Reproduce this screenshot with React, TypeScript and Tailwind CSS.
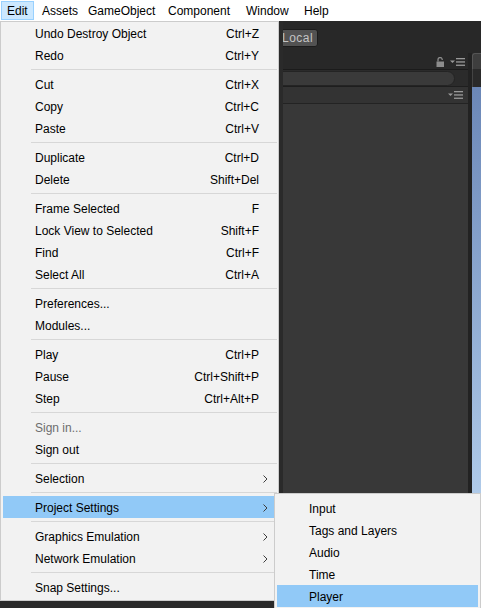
import React from "react";

type Item =
  | { kind: "sep" }
  | { kind: "item"; label: string; shortcut?: string; sub?: boolean; disabled?: boolean; active?: boolean };

const it = (label: string, shortcut?: string, extra: Partial<Item> = {}): Item =>
  ({ kind: "item", label, shortcut, ...extra } as Item);
const SEP: Item = { kind: "sep" };

const EDIT_MENU: Item[] = [
  it("Undo Destroy Object", "Ctrl+Z"),
  it("Redo", "Ctrl+Y"),
  SEP,
  it("Cut", "Ctrl+X"),
  it("Copy", "Ctrl+C"),
  it("Paste", "Ctrl+V"),
  SEP,
  it("Duplicate", "Ctrl+D"),
  it("Delete", "Shift+Del"),
  SEP,
  it("Frame Selected", "F"),
  it("Lock View to Selected", "Shift+F"),
  it("Find", "Ctrl+F"),
  it("Select All", "Ctrl+A"),
  SEP,
  it("Preferences..."),
  it("Modules..."),
  SEP,
  it("Play", "Ctrl+P"),
  it("Pause", "Ctrl+Shift+P"),
  it("Step", "Ctrl+Alt+P"),
  SEP,
  it("Sign in...", undefined, { disabled: true }),
  it("Sign out"),
  SEP,
  it("Selection", undefined, { sub: true }),
  SEP,
  it("Project Settings", undefined, { sub: true, active: true }),
  SEP,
  it("Graphics Emulation", undefined, { sub: true }),
  it("Network Emulation", undefined, { sub: true }),
  SEP,
  it("Snap Settings..."),
];

const PROJECT_SETTINGS = ["Input", "Tags and Layers", "Audio", "Time", "Player"];

const MENUBAR = [
  { label: "Edit", w: "w-[46px]" },
  { label: "Assets", w: "w-[46px]" },
  { label: "GameObject", w: "w-[80px]" },
  { label: "Component", w: "w-[78px]" },
  { label: "Window", w: "w-[58px]" },
  { label: "Help", w: "w-[33px]" },
];

function Chevron() {
  return (
    <svg width="5" height="8" viewBox="0 0 5 8" fill="none">
      <path d="M0.5 0.5L4 4L0.5 7.5" stroke="#3c3c3c" strokeWidth="1" />
    </svg>
  );
}

function MenuIcon() {
  return (
    <svg width="15" height="8" viewBox="0 0 15 8" fill="none">
      <path d="M0 2.5h5L2.5 5z" fill="#9a9a9a" />
      <rect x="6" y="0" width="9" height="1.3" fill="#9a9a9a" />
      <rect x="6" y="3.3" width="9" height="1.3" fill="#9a9a9a" />
      <rect x="6" y="6.6" width="9" height="1.3" fill="#9a9a9a" />
    </svg>
  );
}

function LockIcon() {
  return (
    <svg width="9" height="10" viewBox="0 0 9 10" fill="none">
      <path d="M2 4.5V2.6a2.1 2.1 0 0 1 4.2 0V3" stroke="#8c8c8c" strokeWidth="1.3" />
      <rect x="0.5" y="4.5" width="7.5" height="5.5" fill="#8c8c8c" />
    </svg>
  );
}

export default function App() {
  return (
    <div className="relative h-[608px] w-[481px] overflow-hidden bg-[#2a2a2a] font-['Liberation_Sans',Arial,sans-serif] text-[12px] text-black">
      {/* Menu bar */}
      <div className="relative z-20 flex h-[21px] items-start bg-white">
        <div className="ml-[1px] mt-[1px] flex h-[19px] w-[33px] items-center border border-[#99d1ff] bg-[#cce8ff] pl-[5px] pt-px">
          Edit
        </div>
        <div className="w-px" />
        {MENUBAR.slice(1).map((m) => (
          <div key={m.label} className={`flex h-[21px] items-center pl-[7px] pt-px ${m.w}`}>
            {m.label}
          </div>
        ))}
      </div>

      {/* Editor behind the menu */}
      <div className="flex h-[587px] flex-col bg-[#282828]">
        <div className="flex h-[32px] items-start pt-[8px]">
          <div className="w-[270px]" />
          <div className="flex h-[18px] w-[48px] items-center rounded-[3px] border border-[#1c1c1c] bg-[#525252] pl-[11px] text-[12px] leading-none tracking-[0.5px] text-[#c4c4c4]">
            Local
          </div>
        </div>
        <div className="flex min-h-0 flex-1">
          <div className="flex w-[468px] flex-col">
            <div className="flex h-[16px] items-end justify-end gap-[5px] pb-[2px] pr-[3px]">
              <LockIcon />
              <div className="pb-[1px]">
                <MenuIcon />
              </div>
            </div>
            <div className="h-px bg-[#1b1b1b]" />
            <div className="flex h-[16px] items-center bg-[#2b2b2b]">
              <div className="mr-[13px] h-[15px] flex-1 rounded-r-full border border-[#242424] bg-[#3a3a3a]" />
            </div>
            <div className="h-px bg-[#1e1e1e]" />
            <div className="flex h-[16px] items-center justify-end bg-[#333333] pr-[5px]">
              <MenuIcon />
            </div>
            <div className="h-px bg-[#232323]" />
            <div className="flex-1 bg-[#383838]" />
          </div>
          <div className="w-[4px] bg-[#222222]" />
          <div className="flex flex-1 flex-col">
            <div className="h-[16px] rounded-tl-[3px] border-l border-t border-[#555] bg-[#3e3e3e]" />
            <div className="h-[18px] border-l border-[#444] bg-[#2a2a2a]" />
            <div className="flex-1 bg-gradient-to-b from-[#6b87b7] to-[#c4def7]" />
          </div>
        </div>
      </div>

      {/* Edit dropdown */}
      <div className="absolute left-0 top-[21px] z-10 w-[279px] border border-[#cccccc] bg-[#f2f2f2] pb-[2px] shadow-[0_3px_0_4px_#2a2a2a]">
        {EDIT_MENU.map((m, i) =>
          m.kind === "sep" ? (
            <div key={i} className="flex h-[7px] items-center pl-[30px] pr-px">
              <div className="h-px w-full bg-[#d7d7d7]" />
            </div>
          ) : (
            <div
              key={i}
              className={`mx-[2px] flex h-[22px] items-center pl-[32px] pt-[2px] ${m.active ? "bg-[#91c9f7]" : ""} ${
                m.disabled ? "text-[#6d6d6d]" : ""
              }`}
            >
              <span className="flex-1 whitespace-nowrap">{m.label}</span>
              {m.shortcut && <span className="whitespace-nowrap">{m.shortcut}</span>}
              <div className="flex w-[17px] items-center pl-[4px]">{m.sub && <Chevron />}</div>
            </div>
          )
        )}
      </div>

      {/* Project Settings submenu */}
      <div className="absolute left-[274px] top-[493px] z-10 w-[207px] border border-[#cccccc] bg-[#f2f2f2] pt-[3px] pb-[3px]">
        {PROJECT_SETTINGS.map((s) => (
          <div
            key={s}
            className={`mx-[2px] flex h-[22px] items-center pl-[32px] pt-px ${s === "Player" ? "bg-[#91c9f7]" : ""}`}
          >
            {s}
          </div>
        ))}
      </div>
    </div>
  );
}
